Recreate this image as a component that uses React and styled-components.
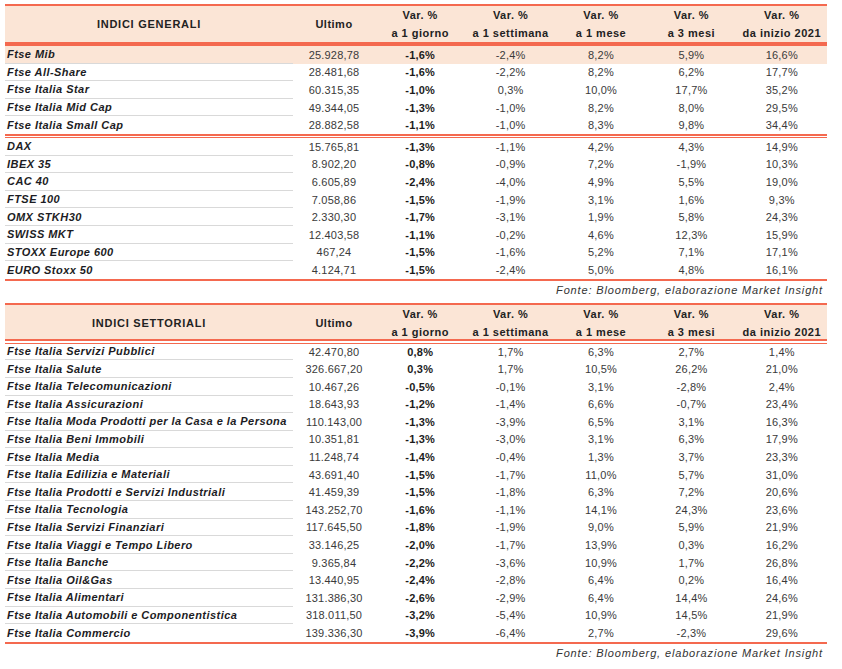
import React from "react";
import styled, { createGlobalStyle } from "styled-components";

const ORANGE = "#f4694f";
const PEACH = "#fbe5d6";
const GRID = "#d9d9d9";

const GlobalStyle = createGlobalStyle`
  html, body { margin: 0; padding: 0; background: #ffffff; }
  body { font-family: "Liberation Sans", Arial, sans-serif; color: #222; }
`;

const Page = styled.div`
  width: 822px;
  padding: 4px 0 0 5px;
`;

const Table = styled.div`
  width: 822px;
  border-bottom: 2px solid ${ORANGE};
`;

const COLS = "288px 82px repeat(5, 1fr)";

const HeaderRow = styled.div`
  display: grid;
  grid-template-columns: ${COLS};
  height: ${(p) => p.$h}px;
  background: ${PEACH};
  border-top: 2px solid ${ORANGE};
  border-bottom: ${(p) => (p.$double ? `2px solid ${ORANGE}` : `4px solid ${ORANGE}`)};
  box-shadow: ${(p) => (p.$double ? `0 2px 0 #ffffff, 0 3px 0 ${ORANGE}` : "none")};
  margin-bottom: ${(p) => (p.$double ? "2px" : "0")};
`;

const HeadCell = styled.div`
  display: flex;
  flex-direction: column;
  align-items: center;
  justify-content: center;
  font-weight: 700;
  font-size: 11px;
  line-height: 18px;
  letter-spacing: ${(p) => (p.$wide ? "0.75px" : "0.5px")};
  color: #222;
  white-space: nowrap;
`;

const Row = styled.div`
  display: grid;
  grid-template-columns: ${COLS};
  height: 17.6px;
  background: ${(p) => (p.$hl ? PEACH : "transparent")};
`;

const NameCell = styled.div`
  display: flex;
  align-items: center;
  padding-left: 2px;
  font-weight: 700;
  font-style: italic;
  font-size: 11px;
  letter-spacing: 0.45px;
  color: #1c1c24;
  white-space: nowrap;
  box-sizing: border-box;
  border-bottom: ${(p) => (p.$last ? "none" : `1px solid ${GRID}`)};
`;

const NumCell = styled.div`
  display: flex;
  align-items: center;
  justify-content: center;
  font-size: 11px;
  font-weight: ${(p) => (p.$bold ? 700 : 400)};
  color: ${(p) => (p.$bold ? "#1c1c1c" : "#3a3a3a")};
  letter-spacing: 0.2px;
  white-space: nowrap;
`;

const GroupBreak = styled.div`
  height: 1px;
  border-top: 2px solid ${ORANGE};
  border-bottom: 1px solid ${ORANGE};
`;

const Source = styled.div`
  text-align: right;
  padding-right: 4px;
  font-style: italic;
  font-size: 11px;
  letter-spacing: 0.85px;
  color: #333;
  line-height: 16px;
  height: ${(p) => p.$h}px;
  padding-top: 1px;
  box-sizing: border-box;
`;

const generali = [
  [
    ["Ftse Mib", "25.928,78", "-1,6%", "-2,4%", "8,2%", "5,9%", "16,6%"],
    ["Ftse All-Share", "28.481,68", "-1,6%", "-2,2%", "8,2%", "6,2%", "17,7%"],
    ["Ftse Italia Star", "60.315,35", "-1,0%", "0,3%", "10,0%", "17,7%", "35,2%"],
    ["Ftse Italia Mid Cap", "49.344,05", "-1,3%", "-1,0%", "8,2%", "8,0%", "29,5%"],
    ["Ftse Italia Small Cap", "28.882,58", "-1,1%", "-1,0%", "8,3%", "9,8%", "34,4%"],
  ],
  [
    ["DAX", "15.765,81", "-1,3%", "-1,1%", "4,2%", "4,3%", "14,9%"],
    ["IBEX 35", "8.902,20", "-0,8%", "-0,9%", "7,2%", "-1,9%", "10,3%"],
    ["CAC 40", "6.605,89", "-2,4%", "-4,0%", "4,9%", "5,5%", "19,0%"],
    ["FTSE 100", "7.058,86", "-1,5%", "-1,9%", "3,1%", "1,6%", "9,3%"],
    ["OMX STKH30", "2.330,30", "-1,7%", "-3,1%", "1,9%", "5,8%", "24,3%"],
    ["SWISS MKT", "12.403,58", "-1,1%", "-0,2%", "4,6%", "12,3%", "15,9%"],
    ["STOXX Europe 600", "467,24", "-1,5%", "-1,6%", "5,2%", "7,1%", "17,1%"],
    ["EURO Stoxx 50", "4.124,71", "-1,5%", "-2,4%", "5,0%", "4,8%", "16,1%"],
  ],
];

const settoriali = [
  [
    ["Ftse Italia Servizi Pubblici", "42.470,80", "0,8%", "1,7%", "6,3%", "2,7%", "1,4%"],
    ["Ftse Italia Salute", "326.667,20", "0,3%", "1,7%", "10,5%", "26,2%", "21,0%"],
    ["Ftse Italia Telecomunicazioni", "10.467,26", "-0,5%", "-0,1%", "3,1%", "-2,8%", "2,4%"],
    ["Ftse Italia Assicurazioni", "18.643,93", "-1,2%", "-1,4%", "6,6%", "-0,7%", "23,4%"],
    ["Ftse Italia Moda Prodotti per la Casa e la Persona", "110.143,00", "-1,3%", "-3,9%", "6,5%", "3,1%", "16,3%"],
    ["Ftse Italia Beni Immobili", "10.351,81", "-1,3%", "-3,0%", "3,1%", "6,3%", "17,9%"],
    ["Ftse Italia Media", "11.248,74", "-1,4%", "-0,4%", "1,3%", "3,7%", "23,3%"],
    ["Ftse Italia Edilizia e Materiali", "43.691,40", "-1,5%", "-1,7%", "11,0%", "5,7%", "31,0%"],
    ["Ftse Italia Prodotti e Servizi Industriali", "41.459,39", "-1,5%", "-1,8%", "6,3%", "7,2%", "20,6%"],
    ["Ftse Italia Tecnologia", "143.252,70", "-1,6%", "-1,1%", "14,1%", "24,3%", "23,6%"],
    ["Ftse Italia Servizi Finanziari", "117.645,50", "-1,8%", "-1,9%", "9,0%", "5,9%", "21,9%"],
    ["Ftse Italia Viaggi e Tempo Libero", "33.146,25", "-2,0%", "-1,7%", "13,9%", "0,3%", "16,2%"],
    ["Ftse Italia Banche", "9.365,84", "-2,2%", "-3,6%", "10,9%", "1,7%", "26,8%"],
    ["Ftse Italia Oil&Gas", "13.440,95", "-2,4%", "-2,8%", "6,4%", "0,2%", "16,4%"],
    ["Ftse Italia Alimentari", "131.386,30", "-2,6%", "-2,9%", "6,4%", "14,4%", "24,6%"],
    ["Ftse Italia Automobili e Componentistica", "318.011,50", "-3,2%", "-5,4%", "10,9%", "14,5%", "21,9%"],
    ["Ftse Italia Commercio", "139.336,30", "-3,9%", "-6,4%", "2,7%", "-2,3%", "29,6%"],
  ],
];

const periods = ["a 1 giorno", "a 1 settimana", "a 1 mese", "a 3 mesi", "da inizio 2021"];

function DataTable({ title, groups, headerHeight, double, highlightFirst }) {
  return (
    <Table>
      <HeaderRow $h={headerHeight} $double={double}>
        <HeadCell $wide>{title}</HeadCell>
        <HeadCell>Ultimo</HeadCell>
        {periods.map((p) => (
          <HeadCell key={p}>
            <span>Var. %</span>
            <span>{p}</span>
          </HeadCell>
        ))}
      </HeaderRow>
      {groups.map((rows, gi) => (
        <React.Fragment key={gi}>
          {gi > 0 && <GroupBreak />}
          {rows.map((r, ri) => (
            <Row key={r[0]} $hl={highlightFirst && gi === 0 && ri === 0}>
              <NameCell $last={ri === rows.length - 1}>{r[0]}</NameCell>
              <NumCell>{r[1]}</NumCell>
              <NumCell $bold>{r[2]}</NumCell>
              <NumCell>{r[3]}</NumCell>
              <NumCell>{r[4]}</NumCell>
              <NumCell>{r[5]}</NumCell>
              <NumCell>{r[6]}</NumCell>
            </Row>
          ))}
        </React.Fragment>
      ))}
    </Table>
  );
}

export default function App() {
  return (
    <Page>
      <GlobalStyle />
      <DataTable title="INDICI GENERALI" groups={generali} headerHeight={36} highlightFirst />
      <Source $h={22}>Fonte: Bloomberg, elaborazione Market Insight</Source>
      <DataTable title="INDICI SETTORIALI" groups={settoriali} headerHeight={34} double />
      <Source $h={20}>Fonte: Bloomberg, elaborazione Market Insight</Source>
    </Page>
  );
}
